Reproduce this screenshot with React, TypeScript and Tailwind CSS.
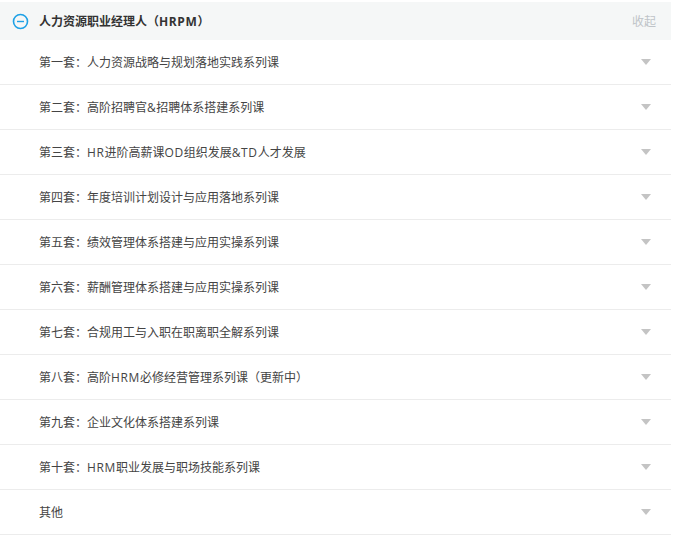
const rows = [
  "第一套\uFF1A人力资源战略与规划落地实践系列课",
  "第二套\uFF1A高阶招聘官&招聘体系搭建系列课",
  "第三套\uFF1AHR进阶高薪课OD组织发展&TD人才发展",
  "第四套\uFF1A年度培训计划设计与应用落地系列课",
  "第五套\uFF1A绩效管理体系搭建与应用实操系列课",
  "第六套\uFF1A薪酬管理体系搭建与应用实操系列课",
  "第七套\uFF1A合规用工与入职在职离职全解系列课",
  "第八套\uFF1A高阶HRM必修经营管理系列课\uFF08更新中\uFF09",
  "第九套\uFF1A企业文化体系搭建系列课",
  "第十套\uFF1AHRM职业发展与职场技能系列课",
  "其他",
];

function Label({ text }: { text: string }) {
  return (
    <>
      {text.split(/([A-Za-z&]+)/).map((part, i) =>
        i % 2 === 1 ? (
          <span key={i} className="tracking-[0.6px]">
            {part}
          </span>
        ) : (
          part
        ),
      )}
    </>
  );
}

export default function App() {
  return (
    <div className="w-[671px] pt-[2px] bg-white font-['Open_Sans','Noto_Sans_CJK_SC',sans-serif] text-[12px] text-[#444]">
      <div className="h-[38px] bg-[#f5f7f7] flex items-center pl-[12px] pr-[15px]">
        <svg width="17" height="17" viewBox="0 0 17 17" className="shrink-0 mr-[10px] mt-[1px]">
          <circle cx="8.5" cy="8.5" r="7" fill="none" stroke="#1ea1e6" strokeWidth="1.6" />
          <rect x="5" y="7.8" width="7" height="1.4" fill="#1ea1e6" />
        </svg>
        <span className="font-bold text-[#333] pt-[1px]">
          <Label text={"人力资源职业经理人\uFF08HRPM\uFF09"} />
        </span>
        <span className="ml-auto text-[#bfc4c8] pt-[1px]">收起</span>
      </div>
      {rows.map((t) => (
        <div key={t} className="h-[45px] flex items-center pl-[39px] pr-[20px] border-b border-[#ececec]">
          <span className="pt-[2px]">
            <Label text={t} />
          </span>
          <svg width="10" height="6" viewBox="0 0 10 6" className="ml-auto shrink-0">
            <path d="M0 0H10L5 6Z" fill="#c4c4c4" />
          </svg>
        </div>
      ))}
    </div>
  );
}
